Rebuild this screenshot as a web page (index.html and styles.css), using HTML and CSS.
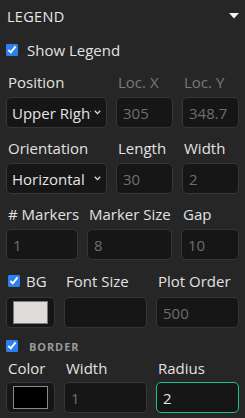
FILE: index.html
```html
<!DOCTYPE html>
<html lang="en">
  <head>
    <meta charset="UTF-8" />
    <meta name="viewport" content="width=device-width, initial-scale=1.0" />
    <title>Legend</title>
    <link rel="stylesheet" href="styles.css">
  </head>
  <body>
    <div class="panel">
      <div class="panel-head">
        <span class="head-title">LEGEND</span>
        <svg class="head-arrow" width="10" height="6" viewBox="0 0 10 6">
          <path d="M0 0 H10 L5 5.5 Z" fill="#f2f2f2" />
        </svg>
      </div>

      <label class="check-row">
        <input type="checkbox" class="chk" checked />
        <span>Show Legend</span>
      </label>

      <div class="row cols-a first">
        <div class="field">
          <div class="lbl">Position</div>
          <div class="select-wrap">
            <select class="select">
              <option>Upper Right</option>
            </select>
            <svg class="chev" width="7" height="5" viewBox="0 0 7 5">
              <path d="M0.8 0.8 L3.5 3.6 L6.2 0.8" stroke="#ddd" stroke-width="1.3" fill="none" />
            </svg>
          </div>
        </div>
        <div class="field">
          <div class="lbl off">Loc. X</div>
          <input class="inp" type="text" value="305" disabled />
        </div>
        <div class="field">
          <div class="lbl off">Loc. Y</div>
          <input class="inp" type="text" value="348.7" disabled />
        </div>
      </div>

      <div class="row cols-a">
        <div class="field">
          <div class="lbl">Orientation</div>
          <div class="select-wrap">
            <select class="select">
              <option>Horizontal</option>
            </select>
            <svg class="chev" width="7" height="5" viewBox="0 0 7 5">
              <path d="M0.8 0.8 L3.5 3.6 L6.2 0.8" stroke="#ddd" stroke-width="1.3" fill="none" />
            </svg>
          </div>
        </div>
        <div class="field">
          <div class="lbl">Length</div>
          <input class="inp" type="text" value="30" disabled />
        </div>
        <div class="field">
          <div class="lbl">Width</div>
          <input class="inp" type="text" value="2" disabled />
        </div>
      </div>

      <div class="row cols-b">
        <div class="field">
          <div class="lbl"># Markers</div>
          <input class="inp" type="text" value="1" disabled />
        </div>
        <div class="field">
          <div class="lbl">Marker Size</div>
          <input class="inp" type="text" value="8" disabled />
        </div>
        <div class="field">
          <div class="lbl">Gap</div>
          <input class="inp" type="text" value="10" disabled />
        </div>
      </div>

      <div class="row cols-c row-bg">
        <div class="field">
          <label class="lbl lbl-check">
            <input type="checkbox" class="chk" checked />
            <span>BG</span>
          </label>
          <div class="color-box">
            <div class="swatch light"></div>
          </div>
        </div>
        <div class="field">
          <div class="lbl">Font Size</div>
          <input class="inp" type="text" value="" />
        </div>
        <div class="field">
          <div class="lbl">Plot Order</div>
          <input class="inp" type="text" value="500" disabled />
        </div>
      </div>

      <label class="check-row section">
        <input type="checkbox" class="chk" checked />
        <span>BORDER</span>
      </label>

      <div class="row cols-c row-border">
        <div class="field">
          <div class="lbl">Color</div>
          <div class="color-box">
            <div class="swatch dark"></div>
          </div>
        </div>
        <div class="field">
          <div class="lbl">Width</div>
          <input class="inp" type="text" value="1" disabled />
        </div>
        <div class="field">
          <div class="lbl">Radius</div>
          <input class="inp focus" type="text" value="2" />
        </div>
      </div>
    </div>
  </body>
</html>
```

FILE: styles.css
```css
body {
  margin: 0;
  background-color: #262626;
  color: #e2e2e2;
  font-family: "Open Sans", "Noto Sans", sans-serif;
  font-size: 15px;
}

.panel {
  padding: 0 6px;
}

.panel-head {
  height: 32px;
  display: flex;
  align-items: center;
  justify-content: space-between;
}

.head-title {
  padding-left: 1px;
  font-size: 14.5px;
  letter-spacing: 0.3px;
  color: #e8e8e8;
}

.check-row {
  display: flex;
  align-items: center;
  height: 20px;
  margin-top: 8px;
  gap: 9px;
}

.chk {
  width: 12px;
  height: 12px;
  margin: 0;
  accent-color: #2b7ff0;
}

.row {
  display: grid;
  column-gap: 9px;
  margin-top: 10px;
}

.row.first {
  margin-top: 12px;
}

.cols-a {
  grid-template-columns: 101px 57px 57px;
}

.cols-b {
  grid-template-columns: 72px 85px 58px;
}

.cols-c {
  grid-template-columns: 49px 83px 83px;
}

.lbl {
  height: 20px;
  line-height: 20px;
  margin-bottom: 5px;
  padding-left: 2px;
  white-space: nowrap;
  color: #e2e2e2;
}

.lbl.off {
  color: #7a7a7a;
}

.row-bg {
  margin-top: 11px;
}

.row-bg .lbl {
  margin-bottom: 6px;
}

.lbl-check {
  display: flex;
  align-items: center;
  gap: 6px;
}

.inp,
.select,
.color-box {
  box-sizing: border-box;
  width: 100%;
  height: 31px;
  background-color: #161616;
  border: 1px solid #363636;
  border-radius: 5px;
  font-family: inherit;
  font-size: 15px;
}

.inp {
  padding: 0 6px;
  color: #e4e4e4;
  outline: none;
}

.inp:disabled {
  color: #6e6e6e;
}

.inp.focus {
  border-color: #19c48c;
}

.select-wrap {
  position: relative;
}

.select {
  appearance: none;
  padding: 0 15px 0 5px;
  color: #e4e4e4;
  outline: none;
}

.chev {
  position: absolute;
  right: 6px;
  top: 13px;
  pointer-events: none;
}

.color-box {
  padding: 3px 6px 3px 6px;
}

.swatch {
  box-sizing: border-box;
  height: 100%;
  border: 1px solid #7c7c7c;
}

.swatch.light {
  background-color: #dddcd8;
}

.swatch.dark {
  background-color: #000;
  border-color: #8a8a8a;
}

.section {
  margin-top: 8px;
  gap: 11px;
}

.section span {
  font-size: 11px;
  font-weight: 700;
  letter-spacing: 0.9px;
  color: #9a9a9a;
}

.row.row-border {
  margin-top: 2px;
}

.row-border .lbl {
  margin-bottom: 4px;
}
```
